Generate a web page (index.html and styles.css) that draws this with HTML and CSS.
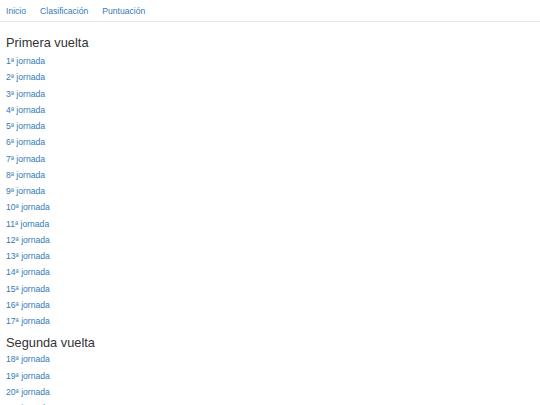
FILE: index.html
```html
<!DOCTYPE html>
<html lang="es">
<head>
  <meta charset="UTF-8">
  <title>Jornadas</title>
  <link rel="stylesheet" href="styles.css">
</head>
<body>
  <nav class="navbar">
    <a href="#">Inicio</a>
    <a href="#">Clasificación</a>
    <a href="#">Puntuación</a>
  </nav>

  <div class="container">
    <h2>Primera vuelta</h2>
    <ul class="jornadas">
      <li><a href="#">1ª jornada</a></li>
      <li><a href="#">2ª jornada</a></li>
      <li><a href="#">3ª jornada</a></li>
      <li><a href="#">4ª jornada</a></li>
      <li><a href="#">5ª jornada</a></li>
      <li><a href="#">6ª jornada</a></li>
      <li><a href="#">7ª jornada</a></li>
      <li><a href="#">8ª jornada</a></li>
      <li><a href="#">9ª jornada</a></li>
      <li><a href="#">10ª jornada</a></li>
      <li><a href="#">11ª jornada</a></li>
      <li><a href="#">12ª jornada</a></li>
      <li><a href="#">13ª jornada</a></li>
      <li><a href="#">14ª jornada</a></li>
      <li><a href="#">15ª jornada</a></li>
      <li><a href="#">16ª jornada</a></li>
      <li><a href="#">17ª jornada</a></li>
    </ul>

    <h2>Segunda vuelta</h2>
    <ul class="jornadas">
      <li><a href="#">18ª jornada</a></li>
      <li><a href="#">19ª jornada</a></li>
      <li><a href="#">20ª jornada</a></li>
      <li><a href="#">21ª jornada</a></li>
      <li><a href="#">22ª jornada</a></li>
    </ul>
  </div>
</body>
</html>
```

FILE: styles.css
```css
body {
  margin: 0;
  font-family: "Liberation Sans", Arial, sans-serif;
  font-size: 8.6px;
  color: #333;
  background: #fff;
}

a {
  color: #337ab7;
  text-decoration: none;
}

.navbar {
  display: flex;
  gap: 14px;
  height: 21px;
  align-items: center;
  padding: 0 6px;
  border-bottom: 1px solid #e7e7e7;
}

.container {
  padding: 0 6px;
}

h2 {
  margin: 12px 0 1px;
  font-size: 12.8px;
  font-weight: 500;
  line-height: 18px;
}

.jornadas + h2 {
  margin-top: 5px;
  margin-bottom: -1px;
}

.jornadas {
  list-style: none;
  margin: 0;
  padding: 0;
}

.jornadas li {
  line-height: 16.25px;
}
```
